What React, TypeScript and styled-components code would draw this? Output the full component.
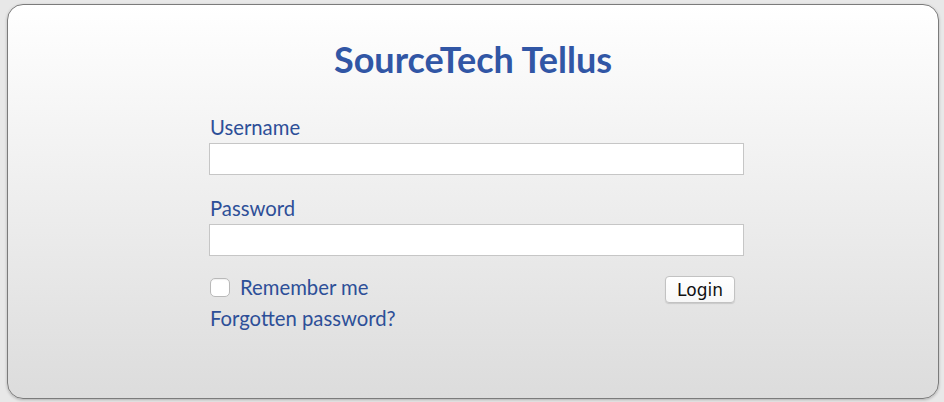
import styled, { createGlobalStyle } from "styled-components";

const GlobalStyle = createGlobalStyle`
  html, body {
    margin: 0;
    padding: 0;
    background: #e8e8e8;
  }
  body {
    font-family: Lato, "Open Sans", sans-serif;
  }
`;

function LoginView() {
  return (
    <Page>
      <GlobalStyle />
      <Panel>
        <Title>SourceTech Tellus</Title>
        <Form onSubmit={(e) => e.preventDefault()}>
          <Field>
            <Label htmlFor="username">Username</Label>
            <TextInput id="username" type="text" />
          </Field>
          <Field $spaced>
            <Label htmlFor="password">Password</Label>
            <TextInput id="password" type="password" />
          </Field>
          <Actions>
            <Left>
              <Remember>
                <Check type="checkbox" />
                <span>Remember me</span>
              </Remember>
              <Forgot href="#">Forgotten password?</Forgot>
            </Left>
            <LoginButton type="submit">Login</LoginButton>
          </Actions>
        </Form>
      </Panel>
    </Page>
  );
}

export default LoginView;

const Page = styled.div`
  padding: 4px 5px 3px 7px;
  height: 402px;
  box-sizing: border-box;
`;

const Panel = styled.div`
  box-sizing: border-box;
  width: 932px;
  height: 395px;
  border: 1px solid #7b7b7b;
  border-radius: 16px;
  background: linear-gradient(#ffffff 0%, #f3f3f3 35%, #dcdcdc 100%);
  box-shadow: 0 1px 3px rgba(0, 0, 0, 0.25);
  padding-top: 35px;
`;

const Title = styled.h1`
  margin: 0;
  text-align: center;
  font-size: 36px;
  line-height: 38px;
  font-weight: 700;
  color: #3156a5;
`;

const Form = styled.form`
  width: 535px;
  margin: 38px 0 0 201px;
`;

const Field = styled.div<{ $spaced?: boolean }>`
  display: flex;
  flex-direction: column;
  gap: 5px;
  margin-top: ${(p) => (p.$spaced ? "22px" : "0")};
`;

const Label = styled.label`
  font-size: 20.3px;
  line-height: 22px;
  color: #2d4f98;
  padding-left: 1px;
`;

const TextInput = styled.input`
  box-sizing: border-box;
  width: 535px;
  height: 32px;
  margin: 0;
  border: 1px solid #c6c6c6;
  background: #fff;
  font-size: 16px;
  padding: 0 6px;
  outline: none;
`;

const Actions = styled.div`
  display: flex;
  justify-content: space-between;
  align-items: flex-start;
  margin-top: 20px;
  padding-right: 9px;
`;

const Left = styled.div`
  display: flex;
  flex-direction: column;
  gap: 9px;
`;

const Remember = styled.label`
  display: flex;
  align-items: center;
  gap: 10px;
  font-size: 20.3px;
  line-height: 22px;
  color: #2d4f98;
  padding-left: 1px;
`;

const Check = styled.input`
  appearance: none;
  margin: 0;
  width: 20px;
  height: 19px;
  border: 1px solid #b9b9b9;
  border-radius: 5px;
  background: #fff;
  box-shadow: inset 0 1px 1px rgba(0, 0, 0, 0.06);
`;

const Forgot = styled.a`
  font-size: 20.3px;
  line-height: 22px;
  color: #2d4f98;
  text-decoration: none;
  padding-left: 1px;
`;

const LoginButton = styled.button`
  box-sizing: border-box;
  width: 70px;
  height: 27px;
  margin-top: 0;
  padding: 0;
  border: 1px solid #c2c2c2;
  border-radius: 4px;
  background: linear-gradient(#ffffff, #f7f7f7);
  box-shadow: 0 1px 1px rgba(0, 0, 0, 0.12);
  font-family: "DejaVu Sans", sans-serif;
  font-size: 17px;
  color: #111;
`;
